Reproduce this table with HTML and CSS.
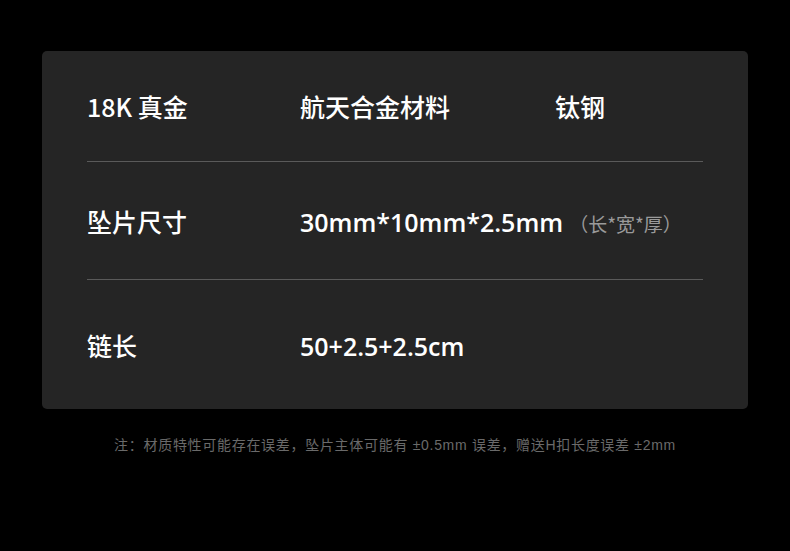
FILE: index.html
```html
<!DOCTYPE html>
<html>

<head>
    <title>材质规格</title>
    <link rel="stylesheet" href="styles.css">
</head>

<body>
    <div class="spec-card">
        <div class="spec-row row-first">
            <div class="col col-a">18K 真金</div>
            <div class="col col-b">航天合金材料</div>
            <div class="col col-c">钛钢</div>
        </div>
        <div class="spec-row row-mid">
            <div class="col col-a">坠片尺寸</div>
            <div class="col col-wide"><span class="num">30mm*10mm*2.5mm</span><span class="hint">（长*宽*厚）</span></div>
        </div>
        <div class="spec-row row-last">
            <div class="col col-a">链长</div>
            <div class="col col-wide"><span class="num">50+2.5+2.5cm</span></div>
        </div>
    </div>
    <p class="note">注：材质特性可能存在误差，坠片主体可能有 ±0.5mm 误差，赠送H扣长度误差 ±2mm</p>
</body>

</html>
```

FILE: styles.css
```css
body {
    margin: 0;
    padding: 0;
    background-color: #000;
    font-family: "Noto Sans CJK SC", sans-serif;
}

.spec-card {
    background-color: #252525;
    border-radius: 5px;
    margin: 51px 0 0 42px;
    width: 706px;
    height: 358px;
    padding: 0 45px;
    box-sizing: border-box;
}

.spec-row {
    display: flex;
    align-items: center;
    border-bottom: 1px solid #5a5a5a;
    color: #fff;
    font-size: 25px;
    font-weight: 500;
}

.row-first {
    height: 110px;
}

.row-mid {
    height: 117px;
}

.row-last {
    height: 129px;
    border-bottom: none;
}

.col-a {
    width: 213px;
}

.col-b {
    width: 255px;
}

.num {
    font-family: "Open Sans", "Noto Sans CJK SC", sans-serif;
    font-weight: 600;
}

.hint {
    color: #9a9a9a;
    font-size: 19px;
    font-weight: 400;
    margin-left: 6px;
}

.note {
    margin: 25px 0 0;
    text-align: center;
    color: #6a6a6a;
    font-family: "Liberation Sans", "Noto Sans CJK SC", sans-serif;
    font-size: 14px;
    letter-spacing: 0.7px;
}
```
